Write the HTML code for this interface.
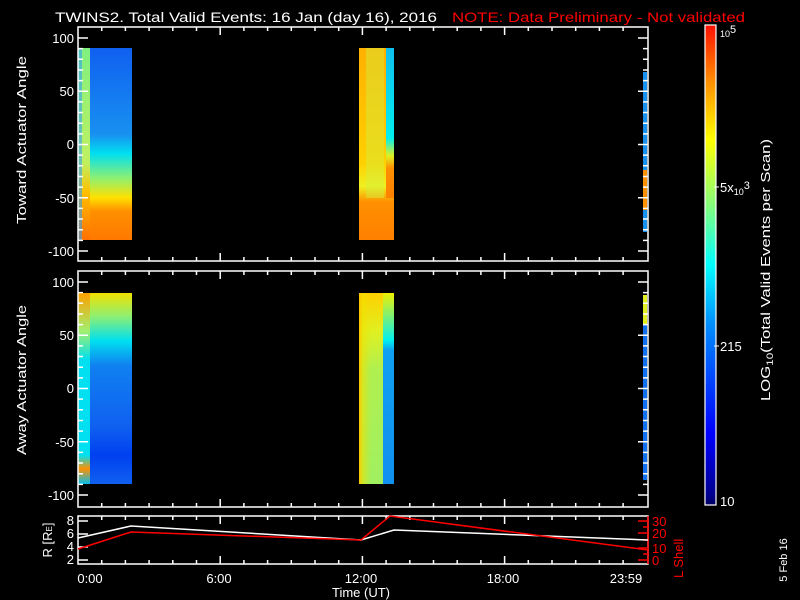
<!DOCTYPE html>
<html><head><meta charset="utf-8"><style>
html,body{margin:0;padding:0;background:#000;width:800px;height:600px;overflow:hidden}
svg{display:block}
text{font-family:"Liberation Sans",sans-serif}
</style></head><body>
<svg id="s" width="800" height="600" xmlns="http://www.w3.org/2000/svg">
<defs>
<linearGradient id="cb" x1="0" y1="1" x2="0" y2="0">
<stop offset="0" stop-color="#000060"/><stop offset="0.02" stop-color="#000090"/>
<stop offset="0.15" stop-color="#0000ff"/><stop offset="0.38" stop-color="#0090ff"/>
<stop offset="0.5" stop-color="#00ffff"/><stop offset="0.62" stop-color="#80ff80"/>
<stop offset="0.76" stop-color="#ffff00"/><stop offset="0.88" stop-color="#ff9000"/>
<stop offset="1" stop-color="#ff1000"/></linearGradient>
<linearGradient id="a1" x1="0" y1="0" x2="0" y2="1">
<stop offset="0" stop-color="#1060f0"/><stop offset="0.45" stop-color="#1890f0"/>
<stop offset="0.55" stop-color="#00e0f0"/><stop offset="0.68" stop-color="#90f070"/>
<stop offset="0.78" stop-color="#ffe000"/><stop offset="0.85" stop-color="#ff9000"/>
<stop offset="1" stop-color="#ff7800"/></linearGradient>
<linearGradient id="a1s" x1="0" y1="0" x2="0" y2="1">
<stop offset="0" stop-color="#80f080"/><stop offset="0.6" stop-color="#c0f060"/>
<stop offset="0.75" stop-color="#ffc000"/><stop offset="1" stop-color="#ff7000"/></linearGradient>
<linearGradient id="b1" x1="0" y1="0" x2="0" y2="1">
<stop offset="0" stop-color="#ffb000"/><stop offset="0.6" stop-color="#ffd000"/>
<stop offset="0.72" stop-color="#f0f020"/><stop offset="0.8" stop-color="#ff9000"/>
<stop offset="1" stop-color="#ff8000"/></linearGradient>
<linearGradient id="b1s" x1="0" y1="0" x2="0" y2="1">
<stop offset="0" stop-color="#10c0f0"/><stop offset="0.6" stop-color="#00f0f0"/>
<stop offset="0.72" stop-color="#e0f020"/><stop offset="0.8" stop-color="#ff9000"/>
<stop offset="1" stop-color="#ff8000"/></linearGradient>
<linearGradient id="a2" x1="0" y1="0" x2="0" y2="1">
<stop offset="0" stop-color="#f0e000"/><stop offset="0.12" stop-color="#90f070"/>
<stop offset="0.25" stop-color="#00e0f0"/><stop offset="0.38" stop-color="#1080f0"/>
<stop offset="0.7" stop-color="#1060f0"/><stop offset="0.85" stop-color="#0040f0"/>
<stop offset="1" stop-color="#1060f0"/></linearGradient>
<linearGradient id="a2s" x1="0" y1="0" x2="0" y2="1">
<stop offset="0" stop-color="#ffa000"/><stop offset="0.2" stop-color="#a0f070"/>
<stop offset="0.35" stop-color="#00e0f0"/><stop offset="0.85" stop-color="#00e0f0"/>
<stop offset="0.92" stop-color="#ff9000"/><stop offset="1" stop-color="#00c0f0"/></linearGradient>
<linearGradient id="b2" x1="0" y1="0" x2="0" y2="1">
<stop offset="0" stop-color="#ffd000"/><stop offset="0.2" stop-color="#e0f020"/>
<stop offset="0.4" stop-color="#b0f050"/><stop offset="1" stop-color="#a0f060"/></linearGradient>
<linearGradient id="b2s" x1="0" y1="0" x2="0" y2="1">
<stop offset="0" stop-color="#f0f000"/><stop offset="0.25" stop-color="#00f0f0"/>
<stop offset="0.3" stop-color="#10a0f0"/><stop offset="1" stop-color="#1090f0"/></linearGradient>
<linearGradient id="b2l" x1="0" y1="0" x2="1" y2="0">
<stop offset="0" stop-color="#ffc000"/><stop offset="0.3" stop-color="#f0e000" stop-opacity="0.6"/><stop offset="1" stop-color="#f0e000" stop-opacity="0"/></linearGradient>
</defs>
<text x="55" y="22" fill="#fff" font-size="14" textLength="382" lengthAdjust="spacingAndGlyphs">TWINS2. Total Valid Events: 16 Jan (day  16), 2016</text>
<text x="452" y="22" fill="#f00" font-size="14" textLength="293" lengthAdjust="spacingAndGlyphs">NOTE: Data Preliminary - Not validated</text>
<!-- panel 1 data -->
<rect x="90" y="48" width="42" height="192" fill="url(#a1)"/>
<rect x="78" y="48" width="12" height="192" fill="url(#a1s)"/>
<rect x="78" y="48" width="4" height="192" fill="#30a0f0" opacity="0.6"/>
<rect x="359" y="48" width="35" height="192" fill="url(#b1)"/>
<rect x="386" y="48" width="8" height="150" fill="url(#b1s)"/>
<rect x="366" y="48" width="18" height="150" fill="#d0f040" opacity="0.45"/>
<rect x="643" y="72" width="4" height="160" fill="#1890f0"/>
<rect x="643" y="170" width="4" height="40" fill="#ff9000"/>
<!-- panel 2 data -->
<rect x="90" y="293" width="42" height="191" fill="url(#a2)"/>
<rect x="78" y="293" width="12" height="191" fill="url(#a2s)"/>
<rect x="359" y="293" width="35" height="191" fill="url(#b2)"/>
<rect x="383" y="293" width="11" height="191" fill="url(#b2s)"/>
<rect x="359" y="293" width="12" height="191" fill="url(#b2l)"/>
<rect x="643" y="295" width="4" height="185" fill="#1070f0"/>
<rect x="643" y="295" width="4" height="30" fill="#e0f020"/>
<g id="ax" stroke="#fff" stroke-width="1.5" fill="none"></g>
<!-- bottom panel lines -->
<polyline points="78,538 131,526 361,540 394,530 648,540" stroke="#fff" stroke-width="1.5" fill="none"/>
<polyline points="78,549 131,532 361,540 390,516 648,550" stroke="#f00" stroke-width="1.5" fill="none"/>
<g fill="#fff" font-size="13" text-anchor="end">
<text x="74" y="43">100</text><text x="74" y="96">50</text><text x="74" y="149">0</text><text x="74" y="203">-50</text><text x="74" y="256">-100</text>
<text x="74" y="287">100</text><text x="74" y="340">50</text><text x="74" y="393">0</text><text x="74" y="447">-50</text><text x="74" y="500">-100</text>
<text x="74" y="525">8</text><text x="74" y="538">6</text><text x="74" y="551">4</text><text x="74" y="564">2</text>
</g>
<g fill="#f00" font-size="13">
<text x="652" y="526">30</text><text x="652" y="538">20</text><text x="652" y="553">10</text><text x="652" y="565">0</text>
<text transform="translate(683,578) rotate(-90)" font-size="13">L Shell</text>
</g>
<g fill="#fff" font-size="13" text-anchor="middle">
<text x="90" y="583">0:00</text><text x="219" y="583">6:00</text><text x="361" y="583">12:00</text><text x="503" y="583">18:00</text><text x="626" y="583">23:59</text>
<text x="361" y="597">Time (UT)</text>
<text transform="translate(26,140) rotate(-90)" textLength="168" lengthAdjust="spacingAndGlyphs">Toward Actuator Angle</text>
<text transform="translate(26,380) rotate(-90)" textLength="150" lengthAdjust="spacingAndGlyphs">Away Actuator Angle</text>
<text transform="translate(52,540) rotate(-90)">R [R<tspan font-size="8">E</tspan>]</text>
<text transform="translate(770,270) rotate(-90)" textLength="262" lengthAdjust="spacingAndGlyphs">LOG<tspan font-size="9" dy="3">10</tspan><tspan dy="-3">(Total Valid  Events per Scan)</tspan></text>
<text transform="translate(787,560) rotate(-90)" font-size="11">5 Feb 16</text>
</g>
<rect x="705" y="25" width="11" height="480" fill="url(#cb)" stroke="#fff" stroke-width="1.2"/>
<g stroke="#fff" stroke-width="1"><line x1="714" y1="187" x2="719" y2="187"/><line x1="714" y1="346" x2="719" y2="346"/></g>
<g fill="#fff" font-size="13">
<text x="720" y="37" font-size="9">10<tspan font-size="11" dy="-4">5</tspan></text>
<text x="720" y="192">5x<tspan font-size="9" dy="3">10</tspan><tspan font-size="11" dy="-6">3</tspan></text>
<text x="720" y="351">215</text>
<text x="720" y="506">10</text>
</g>
<script>
var g=document.getElementById('ax'),d='';
function box(x1,y1,x2,y2){d+='M'+x1+' '+y1+'H'+x2+'V'+y2+'H'+x1+'Z';}
function xt(y1,y2){for(var h=1;h<24;h++){var x=78+h*23.7,L=(h%6==0)?8:4;d+='M'+x+' '+y2+'v-'+L+'M'+x+' '+y1+'v'+L;}}
function yt(c){for(var v=-100;v<=100;v+=10){var y=c-v*1.065,L=(v%50==0)?10:5;d+='M78 '+y+'h'+L+'M648 '+y+'h-'+L;}}
box(78,27,648,261);xt(27,261);yt(144.5);
box(78,271,648,507);xt(271,507);yt(388.5);
box(78,516,648,564);xt(516,564);
[521,534,547,560].forEach(function(y){d+='M78 '+y+'h10';});
var p=document.createElementNS('http://www.w3.org/2000/svg','path');p.setAttribute('d',d);g.appendChild(p);
var r=document.createElementNS('http://www.w3.org/2000/svg','path');
r.setAttribute('d','M648 516V564M648 521h-10M648 533h-10M648 548h-10M648 560h-10M648 527h-5M648 540h-5M648 554h-5');
r.setAttribute('stroke','#f00');g.appendChild(r);
</script>
</svg>
</body></html>
